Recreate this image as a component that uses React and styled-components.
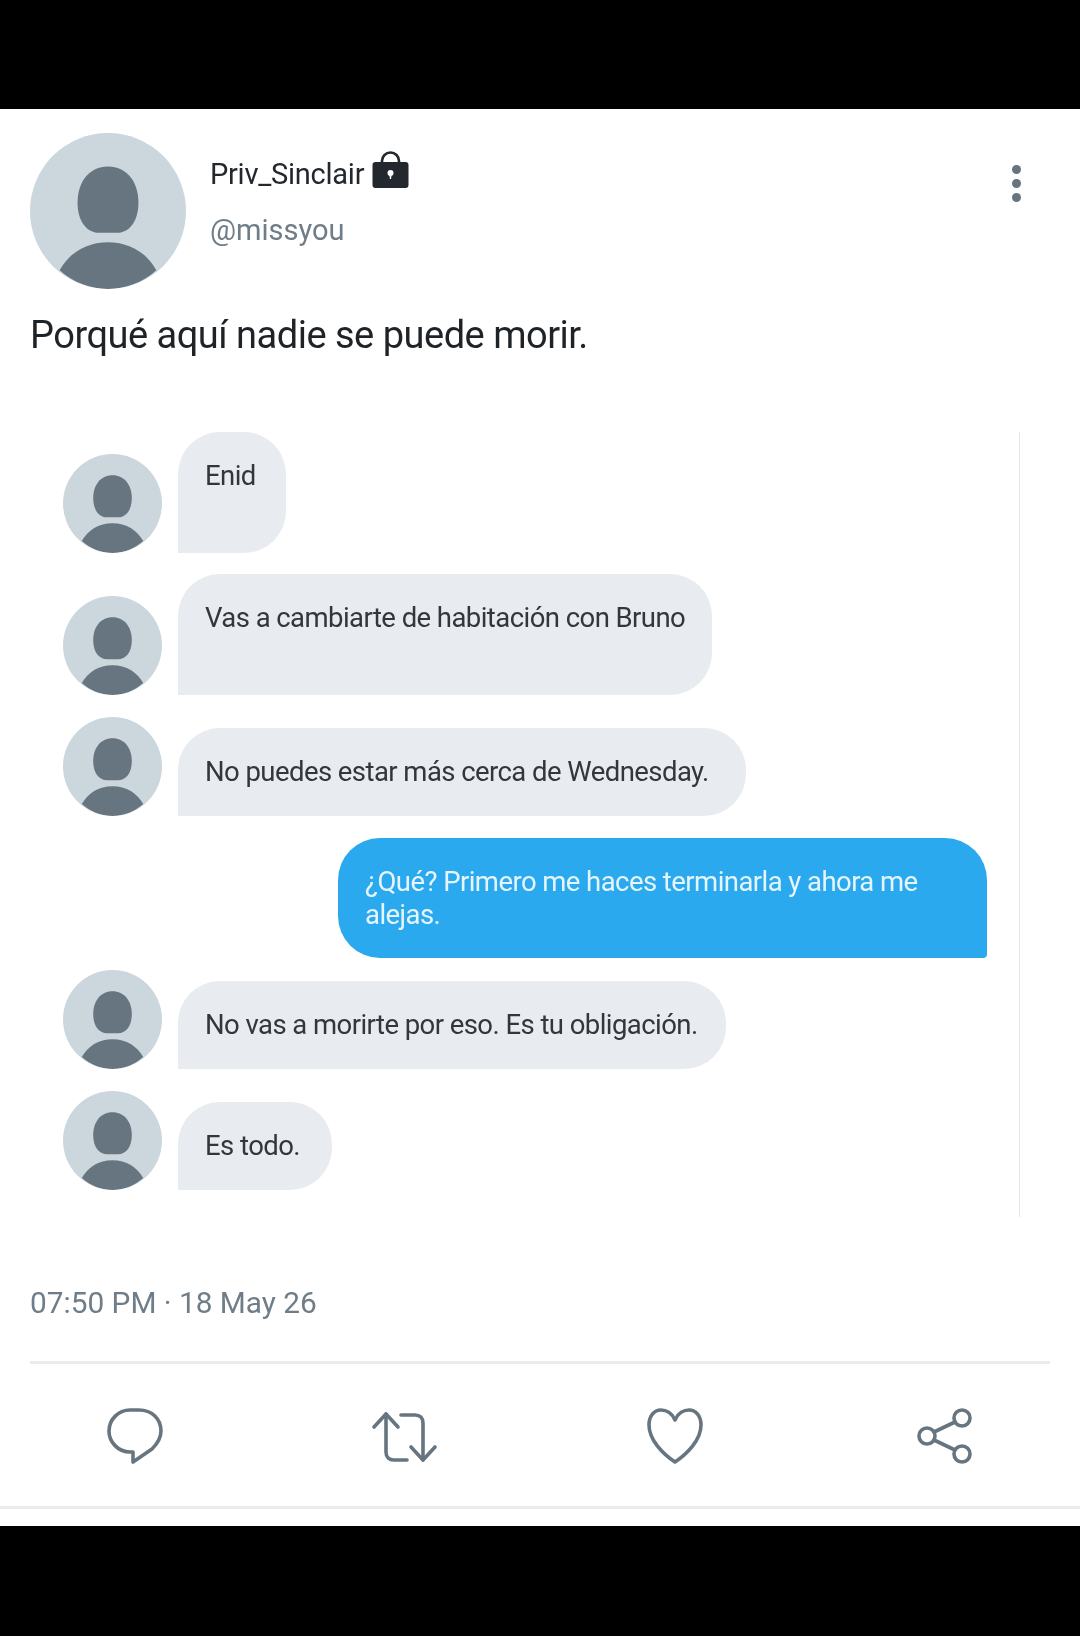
import styled, { createGlobalStyle } from "styled-components";

const GlobalStyle = createGlobalStyle`
  html, body {
    margin: 0;
    background: #000;
  }
  * {
    box-sizing: border-box;
  }
`;

const Screen = styled.div`
  width: 1080px;
  height: 1636px;
  padding-top: 109px;
  background: #000;
  overflow: hidden;
  font-family: Roboto, "Liberation Sans", sans-serif;
`;

const Card = styled.main`
  height: 1417px;
  background: #fff;
  display: flex;
  flex-direction: column;
  filter: blur(0.4px);
`;

const Header = styled.header`
  display: flex;
  align-items: flex-start;
  height: 185px;
  padding: 24px 30px 0;
`;

const ProfilePic = styled.svg`
  width: 156px;
  height: 156px;
  flex: none;
`;

const Names = styled.div`
  flex: 1;
  margin-left: 24px;
  padding-top: 21px;
`;

const NameRow = styled.div`
  display: flex;
  align-items: center;
  gap: 8px;
  height: 40px;
`;

const DisplayName = styled.span`
  font-size: 29px;
  letter-spacing: -0.25px;
  color: #22282d;
`;

const LockWrap = styled.span`
  display: flex;
  margin-top: -8px;
`;

const Handle = styled.div`
  margin-top: 18px;
  font-size: 29px;
  line-height: 36px;
  color: #6f7d88;
`;

const MoreDots = styled.div`
  display: flex;
  flex-direction: column;
  gap: 5px;
  margin: 32px 29px 0 0;
`;

const Dot = styled.span`
  width: 9px;
  height: 9px;
  border-radius: 50%;
  background: #66757f;
`;

const TweetText = styled.p`
  margin: 16px 0 0 30px;
  font-size: 38px;
  line-height: 50px;
  color: #1e2327;
  letter-spacing: -0.5px;
`;

const Thread = styled.section`
  margin: 72px 0 0 63px;
  width: 957px;
  height: 785px;
  border-right: 1px solid #e3e6e9;
  display: flex;
  flex-direction: column;
  padding-right: 32px;
`;

const Row = styled.div`
  display: flex;
  align-items: flex-end;
  gap: 16px;
  margin-top: ${(props) => props.$top}px;
  justify-content: ${(props) => (props.$mine ? "flex-end" : "flex-start")};
`;

const ChatPic = styled.svg`
  width: 99px;
  height: 99px;
  flex: none;
`;

const Bubble = styled.div`
  width: ${(props) => props.$width}px;
  height: ${(props) => props.$height}px;
  padding: 27px 0 0 27px;
  font-size: 27.5px;
  line-height: 33px;
  letter-spacing: -0.56px;
  color: ${(props) => (props.$mine ? "#e6f5fd" : "#31373d")};
  background: ${(props) => (props.$mine ? "#2aa9ef" : "#e8ebef")};
  border-radius: ${(props) =>
    props.$mine ? "42px 42px 4px 42px" : "42px 42px 42px 0"};
`;

const Stamp = styled.div`
  margin: 68px 0 0 30px;
  font-size: 29.8px;
  line-height: 36px;
  color: #6f7d88;
`;

const Divider = styled.hr`
  width: 1020px;
  height: 3px;
  margin: 40px 0 0 30px;
  border: none;
  background: #e9ebed;
`;

const Actions = styled.nav`
  display: grid;
  grid-template-columns: repeat(4, 270px);
  margin-top: 43px;
`;

const ActionSlot = styled.div`
  display: flex;
  justify-content: center;
  color: #66757f;
`;

const FootLine = styled.div`
  margin-top: 41px;
  height: 3px;
  background: #e9ebed;
`;

const Avatar = ({ as: Comp, id }) => (
  <Comp viewBox="0 0 100 100">
    <defs>
      <clipPath id={id}>
        <circle cx="50" cy="50" r="50" />
      </clipPath>
    </defs>
    <g clipPath={`url(#${id})`}>
      <rect width="100" height="100" fill="#ccd6dd" />
      <path
        d="M50 21.500c12 0 19.500 10 19.500 23 0 13-6.500 19.500-14 19.500H44.500c-7.500 0-14-6.500-14-19.500 0-13 7.500-23 19.500-23z"
        fill="#66757f"
      />
      <path d="M19 88c6-11 17-18 31-18s25 7 31 18c-9 8-20 12-31 12s-22-4-31-12z" fill="#66757f" />
    </g>
  </Comp>
);

const LockIcon = () => (
  <svg width="37" height="38" viewBox="0 0 37 38">
    <path d="M10 14V10a8.500 8.500 0 0 1 17 0v4" fill="none" stroke="#22282d" strokeWidth="2.600" />
    <rect x="0.500" y="11" width="36" height="26" rx="3" fill="#22282d" />
    <circle cx="18.500" cy="22" r="3" fill="#fff" />
    <path d="M17.300 23h2.400l-.6 5h-1.200z" fill="#fff" />
  </svg>
);

const iconProps = {
  fill: "none",
  stroke: "currentColor",
  strokeWidth: 3.6,
  strokeLinecap: "round",
  strokeLinejoin: "round",
};

const ReplyIcon = () => (
  <svg width="58" height="58" viewBox="0 0 58 58" {...iconProps}>
    <path d="M24 3h9c13 0 22 9 22 21 0 8-4 13-9 18L27 55V45h-3C12 45 3 35 3 24S12 3 24 3z" />
  </svg>
);

const RetweetIcon = () => (
  <svg width="68" height="58" viewBox="0 0 68 58" {...iconProps}>
    <path d="M15 7v38c0 5 3 8 8 8h13" />
    <path d="M3 20 15 7l12 13" />
    <path d="M30 8h14c5 0 8 3 8 8v37" />
    <path d="M40 40l12 13 12-13" />
  </svg>
);

const HeartIcon = () => (
  <svg width="58" height="58" viewBox="0 0 58 58" {...iconProps}>
    <path d="M29 13C26 6 20 3 15 3 8 3 3 9 3 18c0 15 14 29 26 37 12-8 26-22 26-37 0-9-5-15-12-15-5 0-11 3-14 10z" />
  </svg>
);

const ShareIcon = () => (
  <svg width="58" height="58" viewBox="0 0 58 58" {...iconProps}>
    <circle cx="46" cy="11" r="8" />
    <circle cx="46" cy="47" r="8" />
    <circle cx="11" cy="29" r="8" />
    <path d="M18 25 39 15" />
    <path d="M18 33 39 43" />
  </svg>
);

const messages = [
  { text: "Enid", width: 108, height: 121, top: 0 },
  { text: "Vas a cambiarte de habitación con Bruno", width: 534, height: 121, top: 21 },
  { text: "No puedes estar más cerca de Wednesday.", width: 568, height: 88, top: 22 },
  { text: "¿Qué? Primero me haces terminarla y ahora me alejas.", width: 649, height: 120, top: 22, mine: true },
  { text: "No vas a morirte por eso. Es tu obligación.", width: 548, height: 88, top: 12 },
  { text: "Es todo.", width: 154, height: 88, top: 22 },
];

export default function App() {
  return (
    <Screen>
      <GlobalStyle />
      <Card>
        <Header>
          <Avatar as={ProfilePic} id="main-pic" />
          <Names>
            <NameRow>
              <DisplayName>Priv_Sinclair</DisplayName>
              <LockWrap>
                <LockIcon />
              </LockWrap>
            </NameRow>
            <Handle>@missyou</Handle>
          </Names>
          <MoreDots>
            <Dot />
            <Dot />
            <Dot />
          </MoreDots>
        </Header>
        <TweetText>Porqué aquí nadie se puede morir.</TweetText>
        <Thread>
          {messages.map((m, i) => (
            <Row key={i} $top={m.top} $mine={m.mine}>
              {!m.mine && <Avatar as={ChatPic} id={`chat-pic-${i}`} />}
              <Bubble $width={m.width} $height={m.height} $mine={m.mine}>
                {m.text}
              </Bubble>
            </Row>
          ))}
        </Thread>
        <Stamp>07:50 PM · 18 May 26</Stamp>
        <Divider />
        <Actions>
          <ActionSlot>
            <ReplyIcon />
          </ActionSlot>
          <ActionSlot>
            <RetweetIcon />
          </ActionSlot>
          <ActionSlot>
            <HeartIcon />
          </ActionSlot>
          <ActionSlot>
            <ShareIcon />
          </ActionSlot>
        </Actions>
        <FootLine />
      </Card>
    </Screen>
  );
}
